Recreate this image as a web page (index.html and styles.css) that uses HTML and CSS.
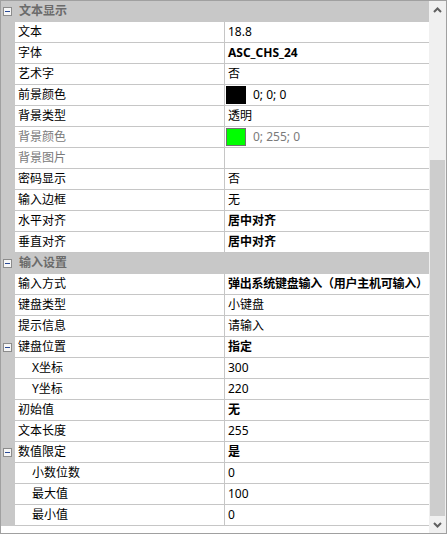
FILE: index.html
```html
<!DOCTYPE html>
<html lang="zh-CN">
<head>
  <meta charset="UTF-8" />
  <title>属性</title>
  <link rel="stylesheet" href="styles.css">
</head>
<body>
  <div class="panel">
    <div class="grid">
      <div class="row cat"><span class="gutter"><i class="toggle"></i></span><span class="cat-name">文本显示</span></div>
      <div class="row"><span class="gutter"></span><span class="name">文本</span><span class="value">18.8</span></div>
      <div class="row"><span class="gutter"></span><span class="name">字体</span><span class="value b">ASC_CHS_24</span></div>
      <div class="row"><span class="gutter"></span><span class="name">艺术字</span><span class="value">否</span></div>
      <div class="row"><span class="gutter"></span><span class="name">前景颜色</span><span class="value"><i class="swatch black"></i>0; 0; 0</span></div>
      <div class="row"><span class="gutter"></span><span class="name">背景类型</span><span class="value">透明</span></div>
      <div class="row dim"><span class="gutter"></span><span class="name">背景颜色</span><span class="value"><i class="swatch green"></i>0; 255; 0</span></div>
      <div class="row dim"><span class="gutter"></span><span class="name">背景图片</span><span class="value"></span></div>
      <div class="row"><span class="gutter"></span><span class="name">密码显示</span><span class="value">否</span></div>
      <div class="row"><span class="gutter"></span><span class="name">输入边框</span><span class="value">无</span></div>
      <div class="row"><span class="gutter"></span><span class="name">水平对齐</span><span class="value b">居中对齐</span></div>
      <div class="row"><span class="gutter"></span><span class="name">垂直对齐</span><span class="value b">居中对齐</span></div>

      <div class="row cat"><span class="gutter"><i class="toggle"></i></span><span class="cat-name">输入设置</span></div>
      <div class="row"><span class="gutter"></span><span class="name">输入方式</span><span class="value b long">弹出系统键盘输入（用户主机可输入）</span></div>
      <div class="row"><span class="gutter"></span><span class="name">键盘类型</span><span class="value">小键盘</span></div>
      <div class="row"><span class="gutter"></span><span class="name">提示信息</span><span class="value">请输入</span></div>
      <div class="row"><span class="gutter"><i class="toggle"></i></span><span class="name">键盘位置</span><span class="value b">指定</span></div>
      <div class="row"><span class="gutter"></span><span class="name sub">X坐标</span><span class="value">300</span></div>
      <div class="row"><span class="gutter"></span><span class="name sub">Y坐标</span><span class="value">220</span></div>
      <div class="row"><span class="gutter"></span><span class="name">初始值</span><span class="value b">无</span></div>
      <div class="row"><span class="gutter"></span><span class="name">文本长度</span><span class="value">255</span></div>
      <div class="row"><span class="gutter"><i class="toggle"></i></span><span class="name">数值限定</span><span class="value b">是</span></div>
      <div class="row"><span class="gutter"></span><span class="name sub">小数位数</span><span class="value">0</span></div>
      <div class="row"><span class="gutter"></span><span class="name sub">最大值</span><span class="value">100</span></div>
      <div class="row"><span class="gutter"></span><span class="name sub">最小值</span><span class="value">0</span></div>
    </div>

    <div class="scrollbar">
      <div class="arrow">
        <svg width="9" height="6" viewBox="0 0 9 6"><polyline points="1,5 4.5,1.5 8,5" fill="none" stroke="#606060" stroke-width="2"/></svg>
      </div>
      <div class="track"><div class="thumb"></div></div>
      <div class="arrow">
        <svg width="9" height="6" viewBox="0 0 9 6"><polyline points="1,1 4.5,4.5 8,1" fill="none" stroke="#606060" stroke-width="2"/></svg>
      </div>
    </div>
  </div>
</body>
</html>
```

FILE: styles.css
```css
:root {
  --gris: #c8c8c8;
  --linha: #c6c6c6;
  --borda: #a0a0a0;
  --texto: #000;
  --apagado: #7a7a7a;
  --font-family: "Noto Sans", "Noto Sans CJK SC", sans-serif;
}

* {
  box-sizing: border-box;
}

body {
  margin: 0;
  background: #fff;
  font-family: var(--font-family);
  font-size: 12px;
  color: var(--texto);
}

.panel {
  width: 447px;
  height: 534px;
  border: 1px solid var(--borda);
  display: flex;
  background: #fff;
}

.grid {
  width: 428px;
  display: flex;
  flex-direction: column;
}

.row {
  display: flex;
  height: 21px;
  line-height: 20px;
}

.gutter {
  width: 14px;
  flex: none;
  background: var(--gris);
  display: flex;
  align-items: center;
  justify-content: center;
  padding-right: 1px;
}

.name {
  width: 210px;
  flex: none;
  padding-left: 3px;
  border-right: 1px solid var(--linha);
  border-bottom: 1px solid var(--linha);
  white-space: nowrap;
}

.name.sub {
  padding-left: 17px;
}

.value {
  flex: 1;
  padding-left: 3px;
  border-bottom: 1px solid var(--linha);
  white-space: nowrap;
  overflow: hidden;
  display: flex;
  align-items: center;
}

.value.long {
  letter-spacing: -0.25px;
}

.b {
  font-weight: bold;
}

.dim .name,
.dim .value {
  color: var(--apagado);
}

.cat {
  background: var(--gris);
}

.cat-name {
  padding-left: 4px;
  font-weight: bold;
  color: #6b6b6b;
}

.toggle {
  display: block;
  width: 9px;
  height: 9px;
  border: 1px solid #8c8c8c;
  background: #f6f6f6;
  position: relative;
}

.toggle::after {
  content: "";
  position: absolute;
  left: 1px;
  top: 3px;
  width: 5px;
  height: 1px;
  background: #2a4a96;
}

.swatch {
  display: inline-block;
  width: 20px;
  height: 18px;
  margin-left: -2px;
  margin-right: 7px;
  border: 1px solid #6f6f6f;
}

.swatch.black {
  background: #000;
  border-color: #000;
}

.swatch.green {
  background: #00ff00;
}

.scrollbar {
  flex: 1;
  background: #f0f0f0;
  display: flex;
  flex-direction: column;
}

.arrow {
  height: 17px;
  display: flex;
  align-items: center;
  justify-content: center;
}

.track {
  flex: 1;
  display: flex;
  flex-direction: column;
  padding: 142px 1px 0;
}

.thumb {
  flex: 1;
  background: #cdcdcd;
}
```
